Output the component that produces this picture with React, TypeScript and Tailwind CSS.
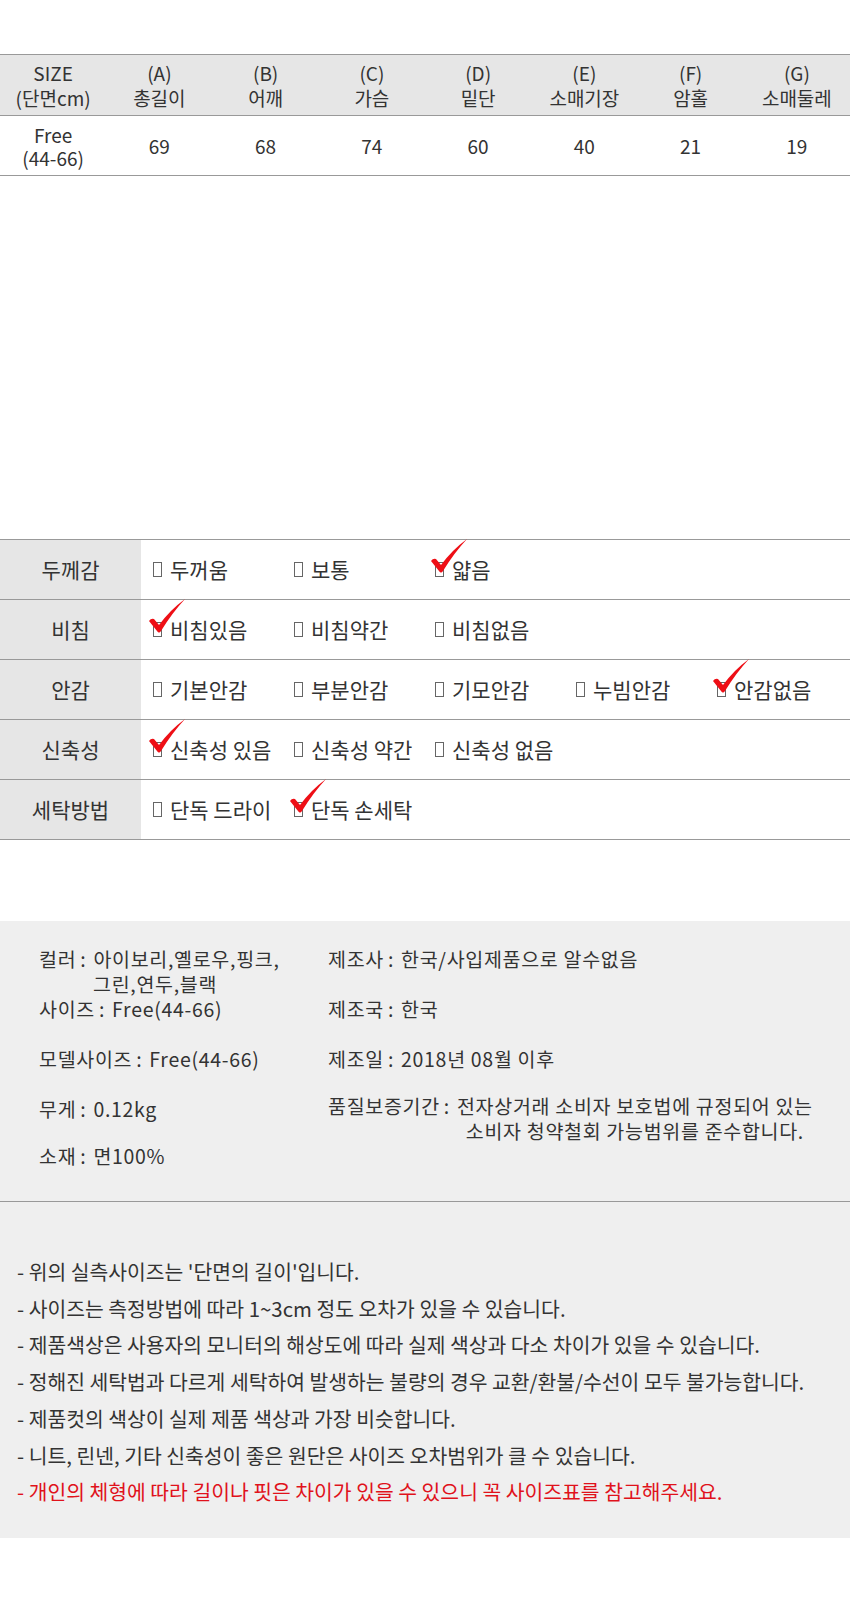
import React from "react";

const headCols = [
  ["SIZE", "(단면cm)"],
  ["(A)", "총길이"],
  ["(B)", "어깨"],
  ["(C)", "가슴"],
  ["(D)", "밑단"],
  ["(E)", "소매기장"],
  ["(F)", "암홀"],
  ["(G)", "소매둘레"],
];

const bodyVals = ["69", "68", "74", "60", "40", "21", "19"];

const props = [
  { label: "두께감", options: ["두꺼움", "보통", "얇음"], checked: 2 },
  { label: "비침", options: ["비침있음", "비침약간", "비침없음"], checked: 0 },
  { label: "안감", options: ["기본안감", "부분안감", "기모안감", "누빔안감", "안감없음"], checked: 4 },
  { label: "신축성", options: ["신축성 있음", "신축성 약간", "신축성 없음"], checked: 0 },
  { label: "세탁방법", options: ["단독 드라이", "단독 손세탁"], checked: 1 },
];

const notes = [
  "- 위의 실측사이즈는 '단면의 길이'입니다.",
  "- 사이즈는 측정방법에 따라 1~3cm 정도 오차가 있을 수 있습니다.",
  "- 제품색상은 사용자의 모니터의 해상도에 따라 실제 색상과 다소 차이가 있을 수 있습니다.",
  "- 정해진 세탁법과 다르게 세탁하여 발생하는 불량의 경우 교환/환불/수선이 모두 불가능합니다.",
  "- 제품컷의 색상이 실제 제품 색상과 가장 비슷합니다.",
  "- 니트, 린넨, 기타 신축성이 좋은 원단은 사이즈 오차범위가 클 수 있습니다.",
];

function Tick() {
  return (
    <svg
      className="absolute left-[-6px] top-[-24px] w-[38px] h-[36px]"
      viewBox="0 0 38 36"
    >
      <path
        d="M1 22 Q3 19 6 20 L11 26 Q22 11 37 0 Q24 14 13 32 Q11 35 9 32 Z"
        fill="#ee0f16"
      />
    </svg>
  );
}

function Option({ text, checked }: { text: string; checked: boolean }) {
  return (
    <div className="w-[141px] pl-[12px] flex items-center shrink-0">
      <span className="relative inline-block w-[9px] h-[15px] border border-[#666] mr-[8px]">
        {checked && <Tick />}
      </span>
      <span className="whitespace-nowrap">{text}</span>
    </div>
  );
}

const Colon = () => <span className="ml-[4px] mr-[7px]">:</span>;

export default function App() {
  return (
    <div className="w-[850px] min-h-[1620px] bg-white text-[#333] font-['Noto_Sans_CJK_KR','Noto_Sans',sans-serif]">
      {/* size table */}
      <div className="pt-[54px]">
        <div className="border-t border-[#999]">
          <div className="grid grid-cols-8 h-[61px] bg-[#e6e6e6] border-b border-[#999] text-[19px] leading-[25px]">
            {headCols.map((c) => (
              <div key={c[0]} className="flex items-center justify-center text-center">
                <span>
                  {c[0]}
                  <br />
                  {c[1]}
                </span>
              </div>
            ))}
          </div>
          <div className="grid grid-cols-8 h-[60px] border-b border-[#999] text-[19px] leading-[23px]">
            <div className="flex items-center justify-center text-center">
              <span>
                Free
                <br />
                (44-66)
              </span>
            </div>
            {bodyVals.map((v, i) => (
              <div key={i} className="flex items-center justify-center">
                {v}
              </div>
            ))}
          </div>
        </div>
      </div>

      {/* fabric table */}
      <div className="mt-[363px] border-t border-[#999] text-[21px]">
        {props.map((p) => (
          <div key={p.label} className="flex h-[60px] border-b border-[#999]">
            <div className="w-[141px] bg-[#e6e6e6] flex items-center justify-center shrink-0">
              {p.label}
            </div>
            <div className="flex">
              {p.options.map((o, i) => (
                <Option key={o} text={o} checked={i === p.checked} />
              ))}
            </div>
          </div>
        ))}
      </div>

      {/* product info */}
      <div className="mt-[81px] bg-[#efefef]">
        <div className="flex pt-[25px] pb-[33px] border-b border-[#999] text-[19.5px] tracking-[0.7px] leading-[25px] whitespace-nowrap">
          <div className="w-[328px] pl-[39px] flex flex-col gap-[25px] shrink-0">
            <div>
              컬러<Colon />아이보리,옐로우,핑크,
              <br />
              <span className="pl-[54px]">그린,연두,블랙</span>
              <br />
              사이즈<Colon />Free(44-66)
            </div>
            <div>
              모델사이즈<Colon />Free(44-66)
            </div>
            <div>
              무게<Colon />0.12kg
            </div>
            <div className="-mt-[3px]">
              소재<Colon />면100%
            </div>
          </div>
          <div className="flex flex-col gap-[25px]">
            <div>
              제조사<Colon />한국/사입제품으로 알수없음
            </div>
            <div>
              제조국<Colon />한국
            </div>
            <div>
              제조일<Colon />2018년 08월 이후
            </div>
            <div className="flex -mt-[3px]">
              <span>
                품질보증기간<Colon />
              </span>
              <span className="text-center">
                전자상거래 소비자 보호법에 규정되어 있는
                <br />
                소비자 청약철회 가능범위를 준수합니다.
              </span>
            </div>
          </div>
        </div>

        {/* notes */}
        <div className="pt-[51px] pb-[28px] pl-[17px] text-[20.4px] leading-[36.7px]">
          {notes.map((n) => (
            <div key={n}>{n}</div>
          ))}
          <div className="text-[#e0121b]">
            - 개인의 체형에 따라 길이나 핏은 차이가 있을 수 있으니 꼭 사이즈표를 참고해주세요.
          </div>
        </div>
      </div>
    </div>
  );
}
